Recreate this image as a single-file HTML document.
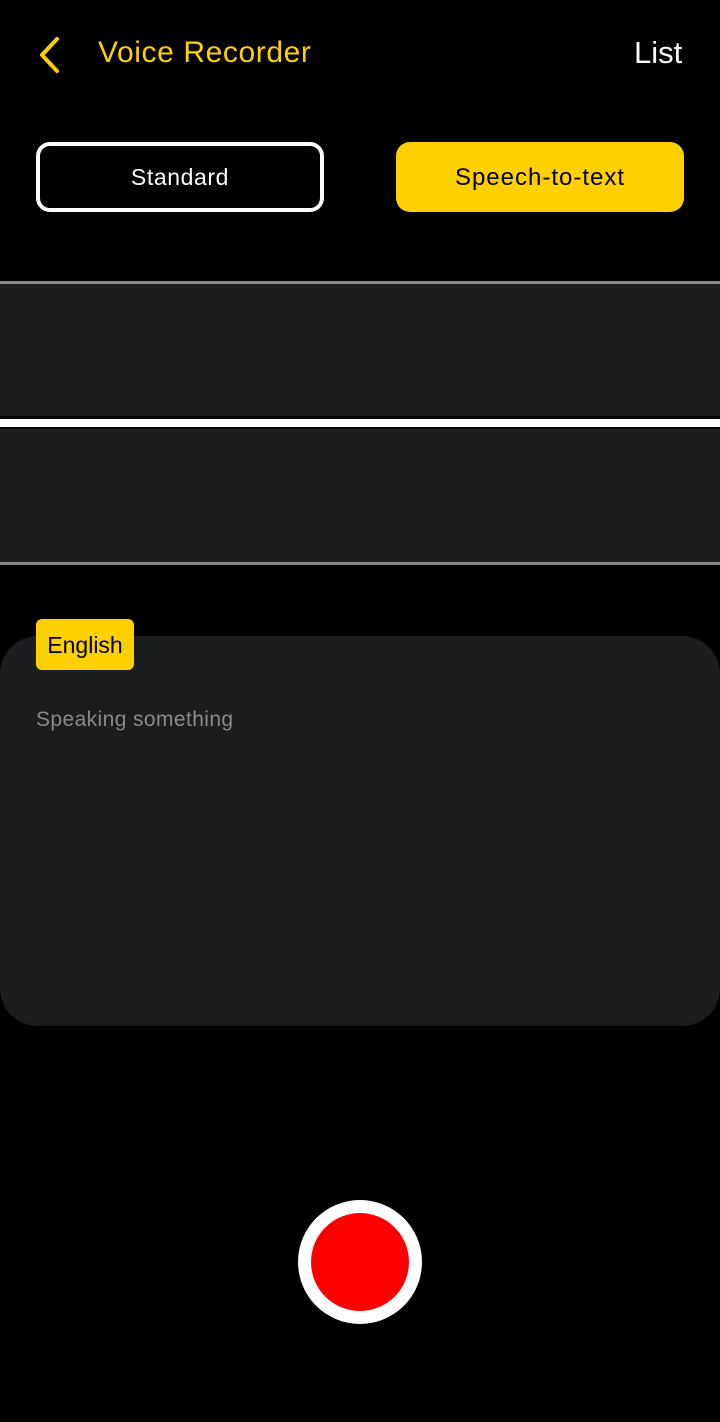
<!DOCTYPE html>
<html><head><meta charset="utf-8"><style>
html,body{margin:0;padding:0;background:#000;width:720px;height:1422px;overflow:hidden;font-family:"Liberation Sans",sans-serif;}
.abs{position:absolute;}
</style></head><body>
<svg class="abs" style="left:36px;top:36px" width="26" height="38" viewBox="0 0 26 38"><path d="M21 3 L6 19 L21 35" fill="none" stroke="#FFD000" stroke-width="4" stroke-linecap="round" stroke-linejoin="round"/></svg>
<div class="abs" style="left:98px;top:35px;font-size:30px;letter-spacing:0.6px;color:#FFD000;line-height:36px;">Voice Recorder</div>
<div class="abs" style="left:634px;top:35px;font-size:31px;color:#fff;line-height:36px;">List</div>
<div class="abs" style="left:36px;top:142px;width:280px;height:62px;border:4px solid #fff;border-radius:14px;color:#fff;font-size:23px;letter-spacing:0.6px;line-height:62px;text-align:center;">Standard</div>
<div class="abs" style="left:396px;top:142px;width:288px;height:70px;background:#FFD000;border-radius:14px;color:#000;font-size:24px;letter-spacing:1px;line-height:72px;text-align:center;">Speech-to-text</div>
<div class="abs" style="left:0;top:281px;width:720px;height:3px;background:#888;"></div>
<div class="abs" style="left:0;top:284px;width:720px;height:132px;background:#1b1d1e;"></div>
<div class="abs" style="left:0;top:419px;width:720px;height:8px;background:#fff;"></div>
<div class="abs" style="left:0;top:429px;width:720px;height:133px;background:#1b1d1e;"></div>
<div class="abs" style="left:0;top:562px;width:720px;height:3px;background:#888;"></div>
<div class="abs" style="left:0;top:636px;width:720px;height:390px;background:#1b1d1e;border-radius:38px;"></div>
<div class="abs" style="left:36px;top:619px;width:98px;height:51px;background:#FFD000;border-radius:6px;color:#000;font-size:23px;line-height:52px;text-align:center;">English</div>
<div class="abs" style="left:36px;top:707px;font-size:21px;letter-spacing:0.4px;color:#8a8a8a;line-height:26px;">Speaking something</div>
<div class="abs" style="left:298px;top:1200px;width:124px;height:124px;border-radius:50%;background:#fff;"></div>
<div class="abs" style="left:311px;top:1213px;width:98px;height:98px;border-radius:50%;background:#ff0000;"></div>
</body></html>
